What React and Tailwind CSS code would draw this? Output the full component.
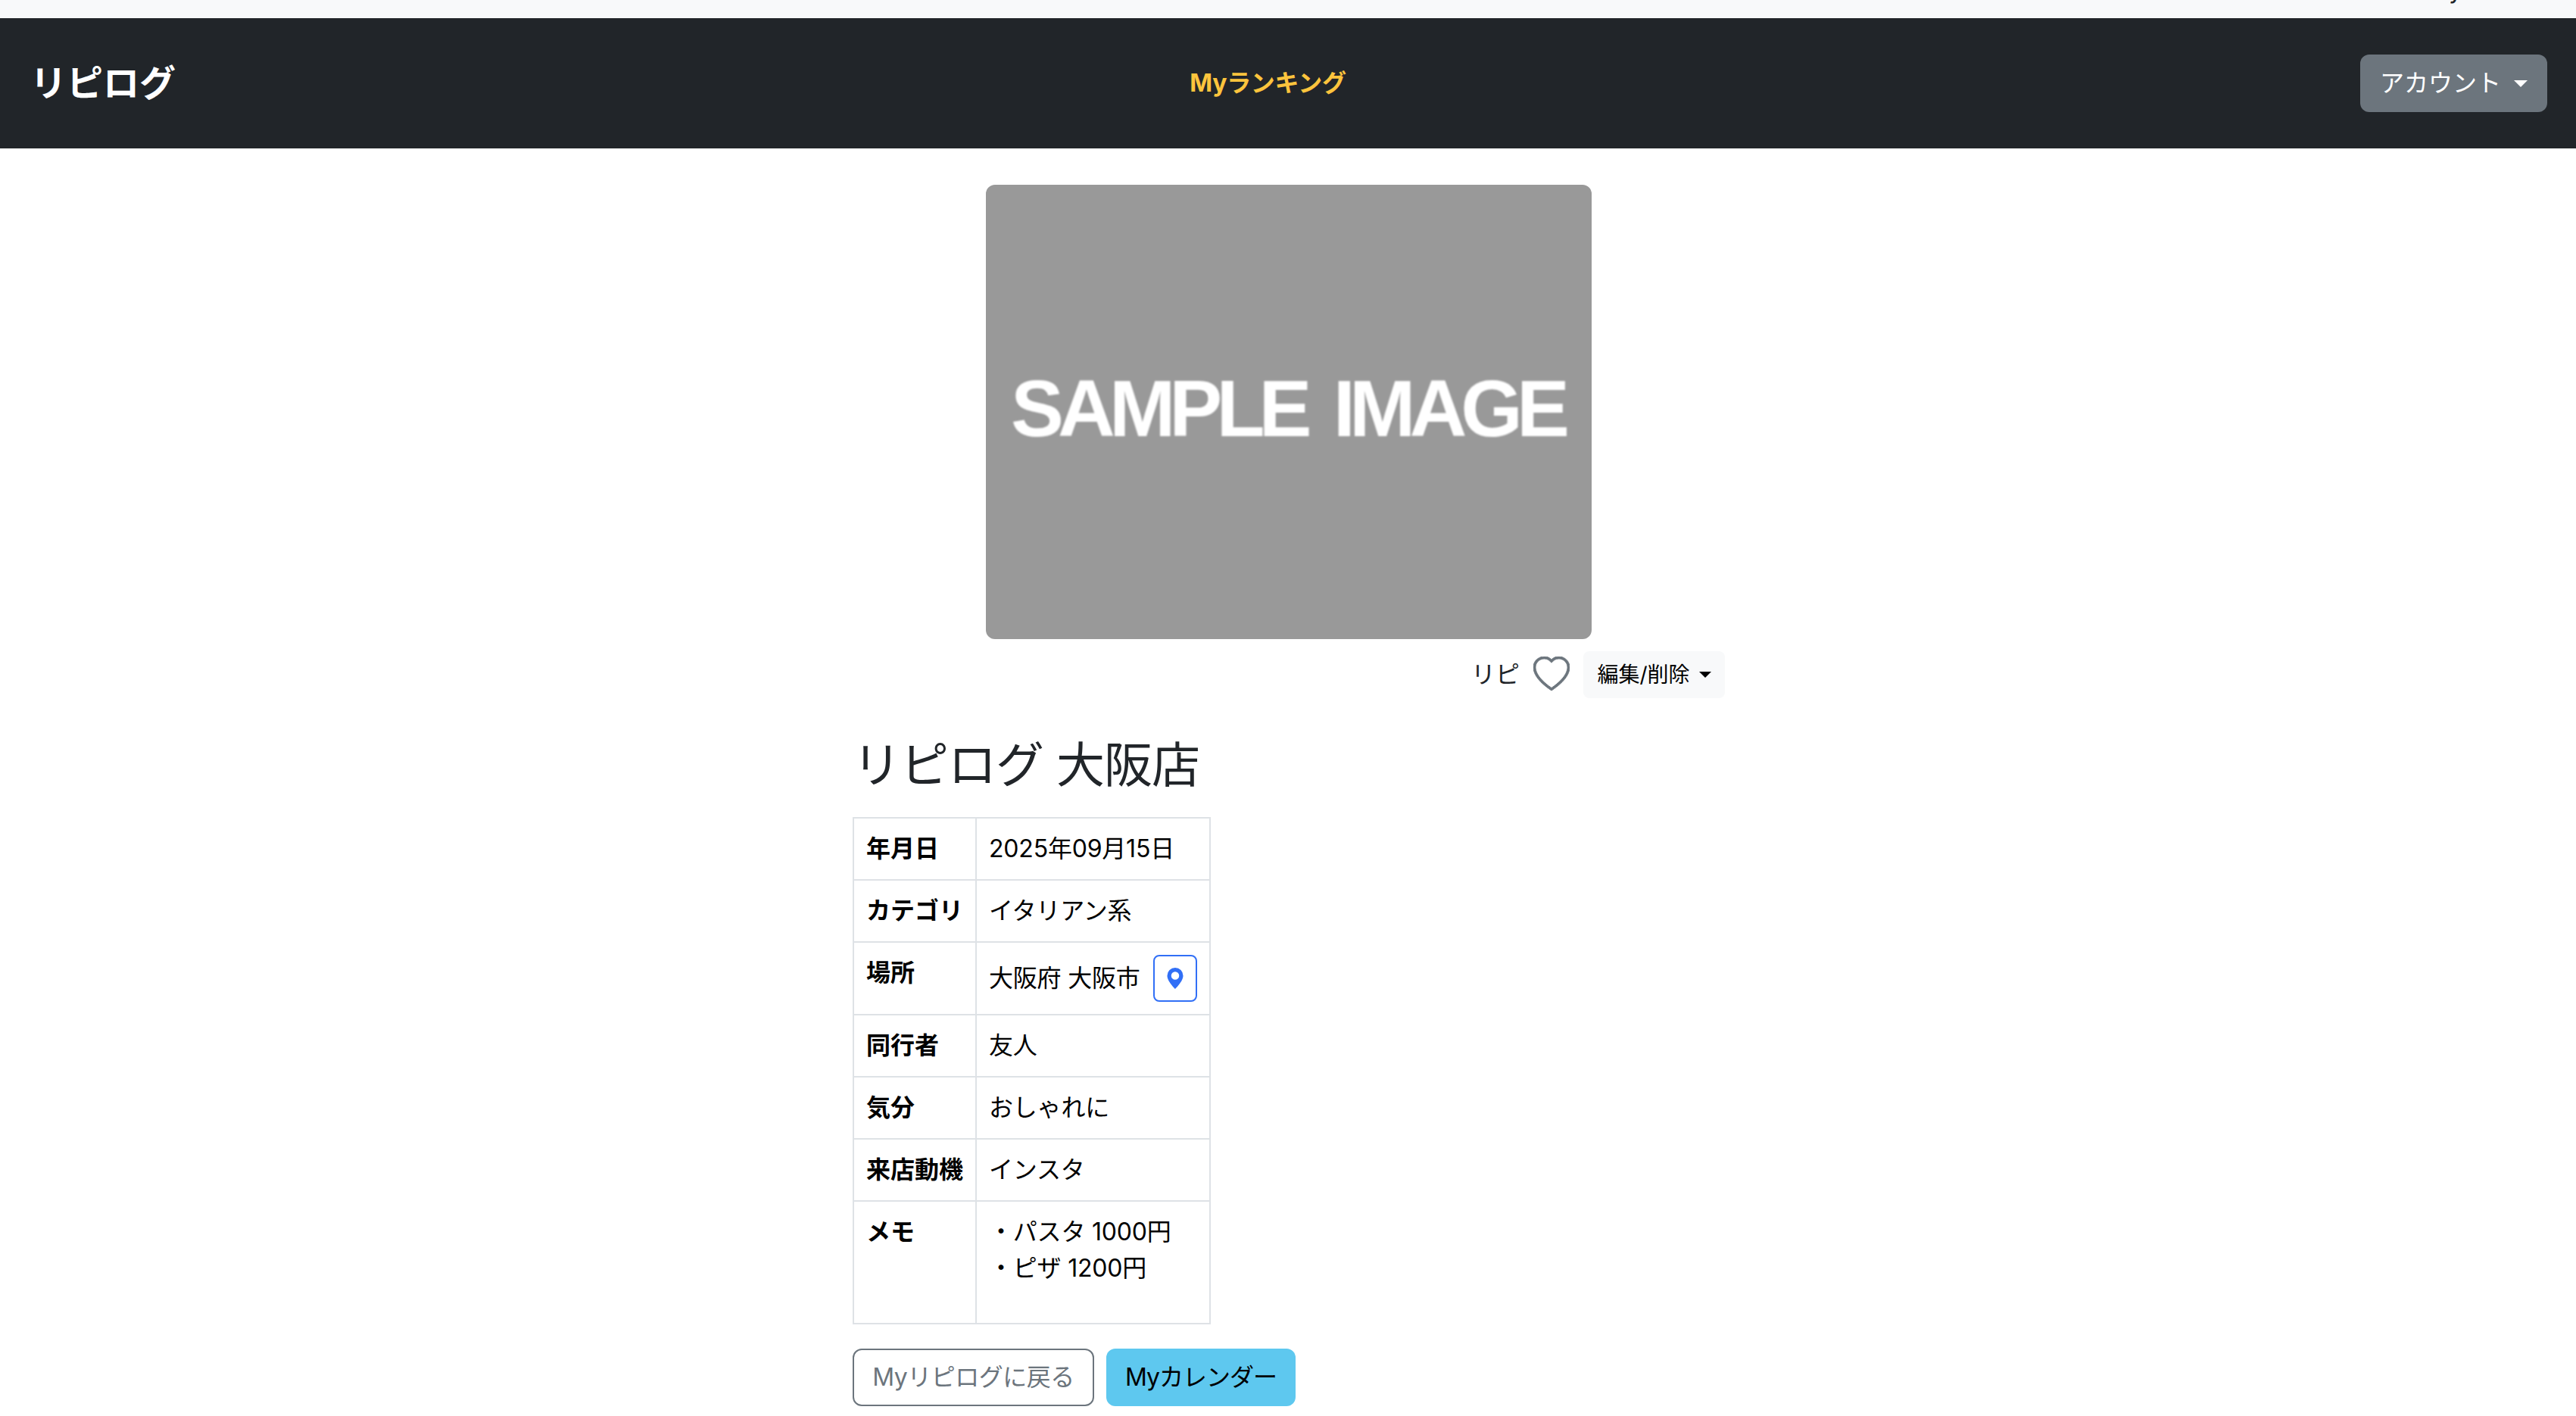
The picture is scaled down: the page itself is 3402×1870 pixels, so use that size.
const rows = [
  { h: "年月日", d: "2025年09月15日" },
  { h: "カテゴリ", d: "イタリアン系" },
  { h: "場所", d: "place" },
  { h: "同行者", d: "友人" },
  { h: "気分", d: "おしゃれに" },
  { h: "来店動機", d: "インスタ" },
  { h: "メモ", d: "memo" },
];

function Pin() {
  return (
    <svg viewBox="0 0 16 16" fill="currentColor" className="w-[28px] h-[28px]">
      <path d="M8 16s6-5.686 6-10A6 6 0 0 0 2 6c0 4.314 6 10 6 10m0-7a3 3 0 1 1 0-6 3 3 0 0 1 0 6" />
    </svg>
  );
}

function Heart() {
  return (
    <svg viewBox="0 0 16 16" fill="currentColor" stroke="currentColor" strokeWidth="0.3" className="w-[48px] h-[48px] text-[#6c757d]">
      <path d="m8 2.748-.717-.737C5.6.281 2.514.878 1.4 3.053c-.523 1.023-.641 2.5.314 4.385.92 1.815 2.834 3.989 6.286 6.357 3.452-2.368 5.365-4.542 6.286-6.357.955-1.886.838-3.362.314-4.385C13.486.878 10.4.28 8.717 2.01zM8 15C-7.333 4.868 3.279-3.04 7.824 1.143q.09.083.176.171a3 3 0 0 1 .176-.17C12.72-3.042 23.333 4.867 8 15" />
    </svg>
  );
}

function Cell({ d }) {
  if (d === "place") {
    return (
      <div className="flex items-center gap-[17px]">
        <span className="whitespace-nowrap tracking-[-0.2px]">大阪府 大阪市</span>
        <span className="flex items-center justify-center w-[58px] h-[62px] rounded-lg border-2 border-[#316ff6] text-[#316ff6]">
          <Pin />
        </span>
      </div>
    );
  }
  if (d === "memo") {
    return (
      <p className="mb-8">
        ・パスタ 1000円
        <br />
        ・ピザ 1200円
      </p>
    );
  }
  return d;
}

export default function App() {
  return (
    <div className="font-['Inter','Noto_Sans_CJK_JP',sans-serif] text-[32px] leading-[48px] text-[#212529] bg-white h-[1870px] overflow-hidden">
      <div className="h-6 bg-[#f8f9fa] overflow-hidden flex justify-end pr-[150px]">
        <span className="text-[32px] leading-none -mt-[29px]">y</span>
      </div>
      <nav className="h-[172px] bg-[#212529] flex items-center justify-between pl-[40px] pr-[38px]">
        <span className="text-[48px] leading-[72px] font-bold text-white">リピログ</span>
        <span className="font-bold text-[#fcc43d] tracking-[-0.3px]">Myランキング</span>
        <button className="h-[76px] w-[247px] flex items-center justify-center gap-[17px] rounded-xl bg-[#6c757d] text-white">
          アカウント
          <span className="inline-block w-0 h-0 border-x-[9px] border-x-transparent border-t-[9px] border-t-white" />
        </button>
      </nav>
      <div className="flex justify-center pl-[2px]">
        <main className="w-[1152px] pt-[48px]">
          <div className="w-[800px] h-[600px] mx-auto rounded-xl bg-[#999999] flex items-center justify-center pb-[10px] pr-[4px] overflow-hidden">
            <span className="font-['Liberation_Sans',sans-serif] font-bold text-[105px] leading-none tracking-[-8px] [word-spacing:15px] text-white blur-[1px] whitespace-nowrap">
              SAMPLE IMAGE
            </span>
          </div>
          <div className="flex items-center justify-end mt-4">
            <span>リピ</span>
            <span className="ml-[18px]"><Heart /></span>
            <button className="ml-[18px] h-[62px] w-[187px] flex items-center justify-center gap-3 rounded-lg bg-[#f8f9fa] text-[28px] leading-[42px] text-black">
              編集/削除
              <span className="inline-block w-0 h-0 border-x-[8px] border-x-transparent border-t-[8px] border-t-black" />
            </button>
          </div>
          <h2 className="mt-[49px] mb-[31px] text-[64px] leading-[77px] font-normal tracking-[-1px]">リピログ 大阪店</h2>
          <table className="border-collapse text-black">
            <tbody>
              {rows.map((r) => (
                <tr key={r.h}>
                  <th className="border-2 border-[#dee2e6] p-4 text-left align-top font-bold whitespace-nowrap">{r.h}</th>
                  <td className="border-2 border-[#dee2e6] p-4 align-top w-[305px] tracking-[-0.2px]">
                    <Cell d={r.d} />
                  </td>
                </tr>
              ))}
            </tbody>
          </table>
          <div className="flex gap-4 mt-8">
            <button className="h-[76px] w-[319px] rounded-xl border-2 border-[#6c757d] text-[#6c757d] tracking-[-0.5px] flex items-center justify-center whitespace-nowrap">
              Myリピログに戻る
            </button>
            <button className="h-[76px] w-[250px] rounded-xl bg-[#5ec8ef] text-black tracking-[-1px] flex items-center justify-center whitespace-nowrap">
              Myカレンダー
            </button>
          </div>
        </main>
      </div>
    </div>
  );
}
